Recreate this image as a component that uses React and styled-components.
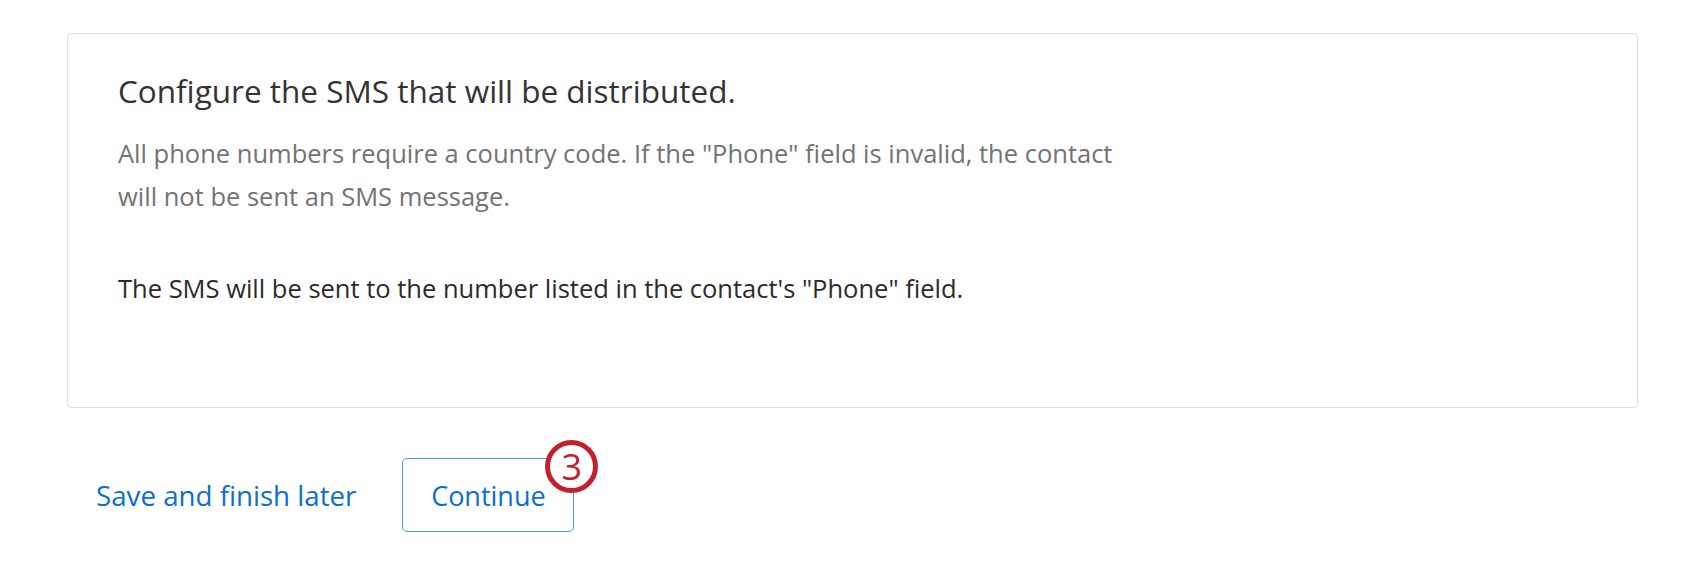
import React from "react";
import styled, { createGlobalStyle } from "styled-components";

const Global = createGlobalStyle`
  html, body { margin: 0; padding: 0; background: #ffffff; }
  body { font-family: "Open Sans", "Liberation Sans", sans-serif; }
`;

const Page = styled.div`
  width: 1700px;
  height: 568px;
  box-sizing: border-box;
  padding: 33px 62px 0 67px;
  display: flex;
  flex-direction: column;
`;

const Card = styled.section`
  box-sizing: border-box;
  height: 375px;
  border: 1px solid #dedede;
  border-radius: 4px;
  padding: 37px 50px 0 50px;
  display: flex;
  flex-direction: column;
`;

const Title = styled.h2`
  margin: 0;
  font-size: 31.5px;
  font-weight: 400;
  line-height: 40px;
  color: #333333;
`;

const Hint = styled.p`
  margin: 21px 0 0;
  max-width: 1010px;
  font-size: 25.5px;
  line-height: 43px;
  color: #737373;
`;

const Note = styled.p`
  margin: 55px 0 0;
  font-size: 25.5px;
  line-height: 30px;
  color: #2b2b2b;
`;

const Footer = styled.div`
  display: flex;
  align-items: center;
  gap: 46px;
  margin-top: 50px;
  padding-left: 29px;
`;

const LinkButton = styled.button`
  border: none;
  background: none;
  padding: 0;
  font-family: inherit;
  font-size: 27.7px;
  font-weight: 500;
  color: #0b6ed0;
  cursor: pointer;
`;

const OutlineButton = styled.button`
  position: relative;
  box-sizing: border-box;
  width: 172px;
  height: 74px;
  padding: 0;
  border: 1.5px solid #5596e0;
  border-radius: 5px;
  background: #ffffff;
  font-family: inherit;
  font-size: 27px;
  font-weight: 500;
  color: #0b6ed0;
  cursor: pointer;
`;

const StepBadge = styled.span`
  position: absolute;
  top: -19px;
  right: -25px;
  box-sizing: border-box;
  width: 53px;
  height: 53px;
  border: 5px solid #c1202f;
  border-radius: 50%;
  background: #ffffff;
  color: #c1202f;
  font-size: 36px;
  font-weight: 500;
  line-height: 1;
  display: flex;
  align-items: center;
  justify-content: center;
`;

export default function App() {
  return (
    <>
      <Global />
      <Page>
        <Card>
          <Title>Configure the SMS that will be distributed.</Title>
          <Hint>
            All phone numbers require a country code. If the "Phone" field is invalid, the contact will not be sent an SMS message.
          </Hint>
          <Note>The SMS will be sent to the number listed in the contact's "Phone" field.</Note>
        </Card>
        <Footer>
          <LinkButton>Save and finish later</LinkButton>
          <OutlineButton>
            Continue
            <StepBadge>3</StepBadge>
          </OutlineButton>
        </Footer>
      </Page>
    </>
  );
}
